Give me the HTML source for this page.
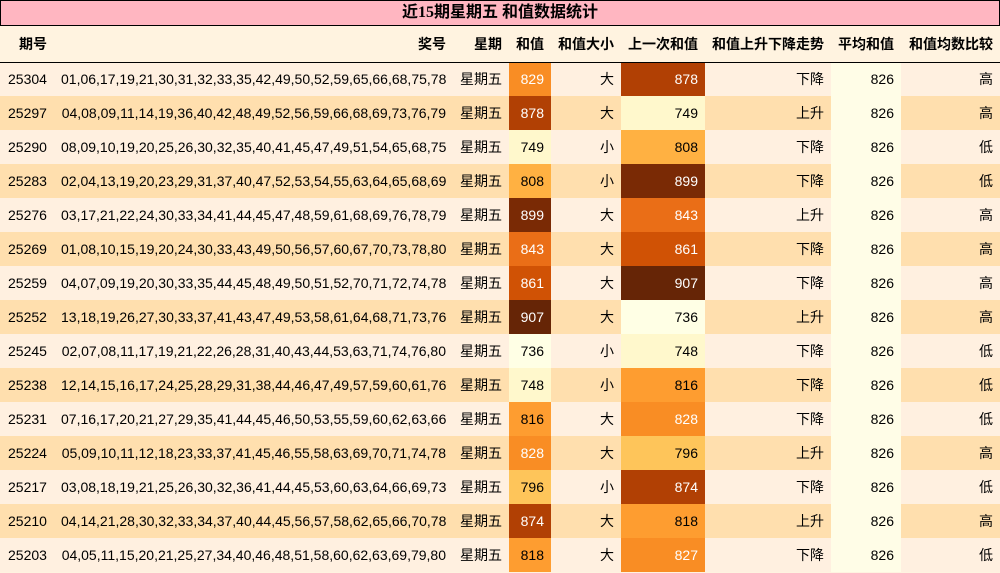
<!DOCTYPE html>
<html><head><meta charset="utf-8"><style>
*{margin:0;padding:0;box-sizing:border-box}
body{width:1000px;height:573px;background:#fff3e0;font-family:"Liberation Sans","Noto Sans CJK SC",sans-serif;font-size:14px;color:#000;overflow:hidden}
.t{height:26px;background:#ffb6c1;border:1px solid #000;text-align:center;font-weight:bold;font-size:16px;line-height:24px;font-family:"Liberation Serif","Noto Sans CJK SC",serif}
table{border-collapse:collapse;width:1000px;table-layout:fixed}
td,th{height:34px;padding:0 7px;white-space:nowrap;text-align:right;color:#000}
th{height:36px;font-weight:bold;border-bottom:1px solid #000;background:#fff3e0}
td:first-child{text-align:left;padding-left:8px}
th:first-child{text-align:left;padding-left:19px}
tr.a td{background:#fff0e0}
tr.b td{background:#ffdfae}
td.av{background:#fffde7!important}
td.w{color:#fff}
</style></head><body>
<div class="t">近15期星期五 和值数据统计</div>
<table>
<colgroup><col style="width:54px"><col style="width:399px"><col style="width:56px"><col style="width:42px"><col style="width:70px"><col style="width:84px"><col style="width:126px"><col style="width:70px"><col style="width:99px"></colgroup>
<tr><th>期号</th><th>奖号</th><th>星期</th><th>和值</th><th>和值大小</th><th>上一次和值</th><th>和值上升下降走势</th><th>平均和值</th><th>和值均数比较</th></tr>
<tr class="a"><td>25304</td><td>01,06,17,19,21,30,31,32,33,35,42,49,50,52,59,65,66,68,75,78</td><td>星期五</td><td class="w" style="background:#f98d24">829</td><td>大</td><td class="w" style="background:#b14004">878</td><td>下降</td><td class="av">826</td><td>高</td></tr>
<tr class="b"><td>25297</td><td>04,08,09,11,14,19,36,40,42,48,49,52,56,59,66,68,69,73,76,79</td><td>星期五</td><td class="w" style="background:#b14004">878</td><td>大</td><td style="background:#fff8cc">749</td><td>上升</td><td class="av">826</td><td>高</td></tr>
<tr class="a"><td>25290</td><td>08,09,10,19,20,25,26,30,32,35,40,41,45,47,49,51,54,65,68,75</td><td>星期五</td><td style="background:#fff8cc">749</td><td>小</td><td style="background:#ffb142">808</td><td>下降</td><td class="av">826</td><td>低</td></tr>
<tr class="b"><td>25283</td><td>02,04,13,19,20,23,29,31,37,40,47,52,53,54,55,63,64,65,68,69</td><td>星期五</td><td style="background:#ffb142">808</td><td>小</td><td class="w" style="background:#7a2a05">899</td><td>下降</td><td class="av">826</td><td>低</td></tr>
<tr class="a"><td>25276</td><td>03,17,21,22,24,30,33,34,41,44,45,47,48,59,61,68,69,76,78,79</td><td>星期五</td><td class="w" style="background:#7a2a05">899</td><td>大</td><td class="w" style="background:#ea6e17">843</td><td>上升</td><td class="av">826</td><td>高</td></tr>
<tr class="b"><td>25269</td><td>01,08,10,15,19,20,24,30,33,43,49,50,56,57,60,67,70,73,78,80</td><td>星期五</td><td class="w" style="background:#ea6e17">843</td><td>大</td><td class="w" style="background:#d05205">861</td><td>下降</td><td class="av">826</td><td>高</td></tr>
<tr class="a"><td>25259</td><td>04,07,09,19,20,30,33,35,44,45,48,49,50,51,52,70,71,72,74,78</td><td>星期五</td><td class="w" style="background:#d05205">861</td><td>大</td><td class="w" style="background:#662506">907</td><td>下降</td><td class="av">826</td><td>高</td></tr>
<tr class="b"><td>25252</td><td>13,18,19,26,27,30,33,37,41,43,47,49,53,58,61,64,68,71,73,76</td><td>星期五</td><td class="w" style="background:#662506">907</td><td>大</td><td style="background:#ffffe5">736</td><td>上升</td><td class="av">826</td><td>高</td></tr>
<tr class="a"><td>25245</td><td>02,07,08,11,17,19,21,22,26,28,31,40,43,44,53,63,71,74,76,80</td><td>星期五</td><td style="background:#ffffe5">736</td><td>小</td><td style="background:#fff8cc">748</td><td>下降</td><td class="av">826</td><td>低</td></tr>
<tr class="b"><td>25238</td><td>12,14,15,16,17,24,25,28,29,31,38,44,46,47,49,57,59,60,61,76</td><td>星期五</td><td style="background:#fff8cc">748</td><td>小</td><td style="background:#fe9d30">816</td><td>下降</td><td class="av">826</td><td>低</td></tr>
<tr class="a"><td>25231</td><td>07,16,17,20,21,27,29,35,41,44,45,46,50,53,55,59,60,62,63,66</td><td>星期五</td><td style="background:#fe9d30">816</td><td>大</td><td class="w" style="background:#f98d24">828</td><td>下降</td><td class="av">826</td><td>低</td></tr>
<tr class="b"><td>25224</td><td>05,09,10,11,12,18,23,33,37,41,45,46,55,58,63,69,70,71,74,78</td><td>星期五</td><td class="w" style="background:#f98d24">828</td><td>大</td><td style="background:#fec55a">796</td><td>上升</td><td class="av">826</td><td>高</td></tr>
<tr class="a"><td>25217</td><td>03,08,18,19,21,25,26,30,32,36,41,44,45,53,60,63,64,66,69,73</td><td>星期五</td><td style="background:#fec55a">796</td><td>小</td><td class="w" style="background:#b14004">874</td><td>下降</td><td class="av">826</td><td>低</td></tr>
<tr class="b"><td>25210</td><td>04,14,21,28,30,32,33,34,37,40,44,45,56,57,58,62,65,66,70,78</td><td>星期五</td><td class="w" style="background:#b14004">874</td><td>大</td><td style="background:#fe9d30">818</td><td>上升</td><td class="av">826</td><td>高</td></tr>
<tr class="a"><td>25203</td><td>04,05,11,15,20,21,25,27,34,40,46,48,51,58,60,62,63,69,79,80</td><td>星期五</td><td style="background:#fe9d30">818</td><td>大</td><td class="w" style="background:#f98d24">827</td><td>下降</td><td class="av">826</td><td>低</td></tr>
</table>
</body></html>
